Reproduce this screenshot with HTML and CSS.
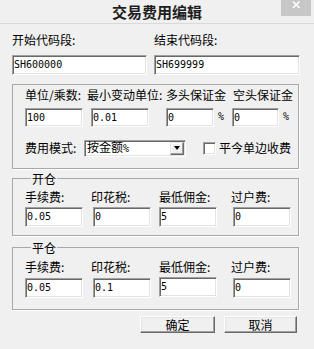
FILE: index.html
```html
<!DOCTYPE html>
<html lang="zh-CN">

<head>
    <meta charset="UTF-8">
    <meta name="viewport" content="width=device-width, initial-scale=1.0">
    <title>交易费用编辑</title>
    <link rel="stylesheet" href="styles.css">
</head>

<body>
    <div class="window">
        <div class="titlebar">
            <span></span>
            <span class="title">交易费用编辑</span>
            <span class="close">
                <svg width="30" height="16" viewBox="0 0 30 16">
                    <path d="M12 1.5 L18.5 8 M18.5 1.5 L12 8" stroke="#fff" stroke-width="1.6" fill="none" />
                </svg>
            </span>
        </div>

        <div class="content">
            <!-- 代码段范围 -->
            <div class="range">
                <div class="range-col start">
                    <div class="lbl">开始代码段:</div>
                    <input class="edit" type="text" value="SH600000">
                </div>
                <div class="range-col end">
                    <div class="lbl">结束代码段:</div>
                    <input class="edit" type="text" value="SH699999">
                </div>
            </div>

            <!-- 合约参数 -->
            <div class="group main">
                <div class="row head">
                    <span class="h1">单位/乘数:</span>
                    <span class="h2">最小变动单位:</span>
                    <span class="h3">多头保证金</span>
                    <span class="h4">空头保证金</span>
                </div>
                <div class="row params">
                    <input class="edit p1" type="text" value="100">
                    <input class="edit p2" type="text" value="0.01">
                    <input class="edit p3" type="text" value="0">
                    <span class="pct">%</span>
                    <input class="edit p4" type="text" value="0">
                    <span class="pct">%</span>
                </div>
                <div class="row mode">
                    <span class="mode-lbl">费用模式:</span>
                    <div class="combo">
                        <span class="combo-text">按金额<span class="pct-sm">%</span></span>
                        <span class="combo-btn"><i class="arrow"></i></span>
                    </div>
                    <span class="check"></span>
                    <span class="check-lbl">平今单边收费</span>
                </div>
            </div>

            <!-- 开仓 -->
            <fieldset class="group fee">
                <legend>开仓</legend>
                <div class="fee-grid">
                    <span class="fee-lbl">手续费:</span>
                    <span class="fee-lbl">印花税:</span>
                    <span class="fee-lbl">最低佣金:</span>
                    <span class="fee-lbl">过户费:</span>
                    <input class="edit" type="text" value="0.05">
                    <input class="edit shift" type="text" value="0">
                    <input class="edit" type="text" value="5">
                    <input class="edit shift" type="text" value="0">
                </div>
            </fieldset>

            <!-- 平仓 -->
            <fieldset class="group fee close-pos">
                <legend>平仓</legend>
                <div class="fee-grid">
                    <span class="fee-lbl">手续费:</span>
                    <span class="fee-lbl">印花税:</span>
                    <span class="fee-lbl">最低佣金:</span>
                    <span class="fee-lbl">过户费:</span>
                    <input class="edit" type="text" value="0.05">
                    <input class="edit shift" type="text" value="0.1">
                    <input class="edit up" type="text" value="5">
                    <input class="edit shift" type="text" value="0">
                </div>
            </fieldset>

            <div class="buttons">
                <button class="btn ok">确定</button>
                <button class="btn cancel">取消</button>
            </div>
        </div>
    </div>
</body>

</html>
```

FILE: styles.css
```css
html,
body {
    margin: 0;
    padding: 0;
}

body {
    font-family: "Noto Sans CJK SC", sans-serif;
    font-size: 12px;
    color: #000;
    background: #f0f0f0;
}

.window {
    width: 314px;
    height: 349px;
    background: #f0f0f0;
}

/* 标题栏 */
.titlebar {
    height: 23px;
    display: grid;
    grid-template-columns: 1fr auto 1fr;
    border-bottom: 1px solid #d9d9d9;
}

.titlebar .title {
    font-size: 15px;
    font-weight: bold;
    line-height: 24px;
    color: #1e1e1e;
}

.titlebar .close {
    justify-self: end;
    width: 30px;
    height: 16px;
    margin-right: 3px;
    background: #c7c7c7;
}

.titlebar .close svg {
    display: block;
}

.content {
    padding: 0 15px 0 12px;
}

.lbl,
.row span,
.fee-lbl {
    line-height: 16px;
    white-space: nowrap;
}

/* 输入框 */
.edit {
    box-sizing: border-box;
    height: 19px;
    margin: 0;
    padding: 0 1px;
    font-family: "DejaVu Sans Mono", monospace;
    font-size: 10px;
    color: #000;
    background: #fff;
    border: 1px solid;
    border-color: #a0a0a0 #fff #fff #a0a0a0;
    box-shadow: inset 1px 1px 0 #696969, inset -1px -1px 0 #e3e3e3;
    outline: none;
}

.range {
    display: flex;
    margin-top: 8px;
}

.range-col .lbl {
    margin-bottom: 6px;
}

.range-col .edit {
    height: 20px;
}

.range-col.start .edit {
    width: 135px;
}

.range-col.end {
    margin-left: 7px;
}

.range-col.end .edit {
    width: 146px;
}

/* 分组框 */
.group {
    box-sizing: border-box;
    width: 287px;
    border: 1px solid #a8a8a8;
    box-shadow: 1px 1px 0 #fff;
}

.group.main {
    margin-top: 9px;
    padding: 2px 0 11px 12px;
}

.row {
    display: flex;
    align-items: center;
}

.row.head .h1 {
    width: 62px;
}

.row.head .h2 {
    width: 79px;
}

.row.head .h3 {
    width: 67px;
}

.row.params {
    margin-top: 5px;
}

.row.params .p1,
.row.params .p2 {
    width: 58px;
}

.row.params .p2 {
    margin-left: 8px;
}

.row.params .p3 {
    width: 48px;
    margin-left: 17px;
}

.row.params .p4 {
    width: 47px;
    margin-left: 8px;
}

.row .pct {
    margin-left: 4px;
    font-family: "DejaVu Sans Mono", monospace;
    font-size: 10px;
    width: 6px;
}

.row.mode {
    margin-top: 13px;
}

.mode-lbl {
    width: 59px;
}

/* 下拉框 */
.combo {
    box-sizing: border-box;
    width: 102px;
    height: 17px;
    display: flex;
    align-items: center;
    justify-content: space-between;
    padding: 0 1px 0 2px;
    background: #fff;
    border: 1px solid;
    border-color: #a0a0a0 #fff #fff #a0a0a0;
    box-shadow: inset 1px 1px 0 #696969, inset -1px -1px 0 #e3e3e3;
}

.combo-text {
    line-height: 15px;
}

.row .combo-text .pct-sm {
    font-family: "DejaVu Sans Mono", monospace;
    font-size: 10px;
}

.combo-btn {
    box-sizing: border-box;
    width: 14px;
    height: 13px;
    display: flex;
    align-items: center;
    justify-content: center;
    background: #f0f0f0;
    border: 1px solid;
    border-color: #e3e3e3 #696969 #696969 #e3e3e3;
    box-shadow: inset -1px -1px 0 #a0a0a0, inset 1px 1px 0 #fff;
}

.arrow {
    width: 0;
    height: 0;
    border-left: 3.5px solid transparent;
    border-right: 3.5px solid transparent;
    border-top: 4px solid #000;
}

/* 复选框 */
.check {
    box-sizing: border-box;
    width: 13px;
    height: 13px;
    margin-left: 17px;
    background: #fff;
    border: 1px solid;
    border-color: #a0a0a0 #fff #fff #a0a0a0;
    box-shadow: inset 1px 1px 0 #696969, inset -1px -1px 0 #e3e3e3;
}

.check-lbl {
    margin-left: 3px;
}

/* 开仓 / 平仓 */
fieldset.group {
    margin: 4px 0 0;
    padding: 4px 0 8px 12px;
    min-width: 0;
}

fieldset.group legend {
    padding: 0 1px;
    margin-left: 6px;
    line-height: 12px;
}

fieldset.close-pos {
    margin-top: 6px;
    padding-top: 5px;
    padding-bottom: 11px;
}

.fee-grid {
    display: grid;
    grid-template-columns: 66px 68px 72px 58px;
    row-gap: 2px;
}

fieldset.close-pos .fee-grid {
    row-gap: 3px;
}

.fee-grid .edit {
    width: 58px;
    height: 20px;
}

.fee-grid .edit.shift {
    margin-left: 2px;
}

.fee-grid .edit.up {
    margin-top: -1px;
    margin-bottom: 1px;
}

/* 按钮 */
.buttons {
    display: flex;
    justify-content: flex-end;
    gap: 9px;
    margin: 6px 2px 0 0;
}

.btn {
    box-sizing: border-box;
    height: 17px;
    padding: 0;
    font-family: "Noto Sans CJK SC", sans-serif;
    font-size: 12px;
    line-height: 13px;
    color: #000;
    background: #f0f0f0;
    border: 1px solid;
    border-color: #fff #696969 #696969 #fff;
    box-shadow: inset -1px -1px 0 #a0a0a0, inset 1px 1px 0 #e3e3e3;
}

.btn.ok {
    width: 75px;
}

.btn.cancel {
    width: 73px;
}
```
